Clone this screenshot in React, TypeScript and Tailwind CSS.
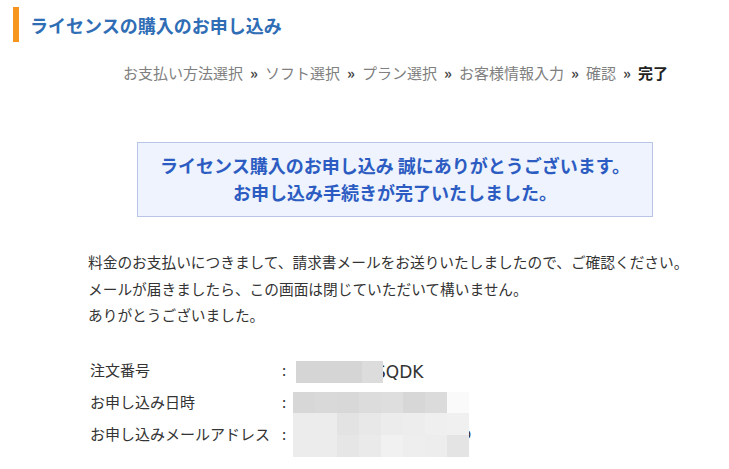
import React from 'react';

const steps = ['お支払い方法選択', 'ソフト選択', 'プラン選択', 'お客様情報入力', '確認', '完了'];

const row2Cells = ['#d7d7d7', '#d9d9d9', '#d8d8d8', '#dcdcdc', '#dedede', '#d6d7d6', '#dbdbdb', '#fafafa'];
const row3Top = ['#ececec', '#ececec', '#e3e3e3', '#e8e8e8', '#ececec', '#ededed', '#efefef', '#f0f0f0'];
const row3Bottom = ['#ececec', '#ececec', '#e6e6e6', '#eaeaea', '#f1f1f1', '#eeeeee', '#ededed', '#e4e4e4'];

const MosaicRow: React.FC<{ colors: string[]; h: string }> = ({ colors, h }) => (
  <div className="flex">
    {colors.map((c, i) => (
      <div key={i} className={`w-[22px] ${h}`} style={{ backgroundColor: c }} />
    ))}
  </div>
);

export default function App() {
  return (
    <div className="w-[729px] h-[469px] overflow-hidden bg-white font-['Noto_Sans_CJK_JP',sans-serif] text-[#333]">
      {/* header */}
      <div className="flex items-center pt-[7px] pl-[13px]">
        <div className="w-[6px] h-[35px] bg-[#f7941d]" />
        <h1 className="ml-[11px] text-[18px] leading-[24px] font-bold text-[#2f6db5]">
          ライセンスの購入のお申し込み
        </h1>
      </div>

      {/* steps */}
      <div className="mt-[19px] pl-[123px] flex items-center text-[15px] leading-[24px] text-[#808080] whitespace-nowrap">
        {steps.map((s, i) => (
          <React.Fragment key={s}>
            {i > 0 && (
              <span className="inline-block w-[22px] text-center font-bold text-[#444]">»</span>
            )}
            <span className={i === steps.length - 1 ? 'font-bold text-[#222]' : ''}>{s}</span>
          </React.Fragment>
        ))}
      </div>

      {/* notice */}
      <div className="mt-[57px] ml-[137px] w-[516px] h-[75px] border border-[#b9c5e6] bg-[#eef3fd] py-[9px] text-center text-[18px] leading-[27px] font-bold text-[#2c5cc2] whitespace-nowrap">
        <p>ライセンス購入のお申し込み 誠にありがとうございます。</p>
        <p>お申し込み手続きが完了いたしました。</p>
      </div>

      {/* message */}
      <div className="mt-[32px] pl-[88px] text-[14.7px] leading-[26.5px] text-[#333] whitespace-nowrap">
        <p>料金のお支払いにつきまして、請求書メールをお送りいたしましたので、ご確認ください。</p>
        <p>メールが届きましたら、この画面は閉じていただいて構いません。</p>
        <p>ありがとうございました。</p>
      </div>

      {/* order details */}
      <div className="relative mt-[26px] pl-[90px] text-[15px] text-[#333]">
        <div className="grid grid-cols-[192px_14px_1fr] items-center">
          <div className="h-[32px] flex items-center">注文番号</div>
          <div>:</div>
          <div className="font-['DejaVu_Sans',sans-serif] text-[17px] leading-[20px] pl-[79px] pt-[2px]">SQDK</div>

          <div className="h-[32px] flex items-center">お申し込み日時</div>
          <div>:</div>
          <div />

          <div className="h-[31px] flex items-center">お申し込みメールアドレス</div>
          <div>:</div>
          <div className="font-['DejaVu_Sans',sans-serif] text-[15px] pl-[166px]">o</div>
        </div>

        {/* redaction mosaics */}
        <div className="absolute left-[296px] top-[6px] flex">
          <div className="w-[66px] h-[22px] bg-[#d5d5d5]" />
          <div className="w-[21px] h-[22px] bg-[#dcdcdc]" />
        </div>
        <div className="absolute left-[293px] top-[37px]">
          <MosaicRow colors={row2Cells} h="h-[21px]" />
        </div>
        <div className="absolute left-[293px] top-[58px]">
          <MosaicRow colors={row3Top} h="h-[22px]" />
          <MosaicRow colors={row3Bottom} h="h-[22px]" />
        </div>
      </div>
    </div>
  );
}
